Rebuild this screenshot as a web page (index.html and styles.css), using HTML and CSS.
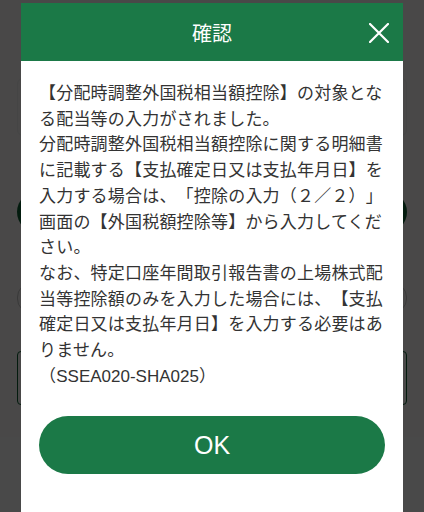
FILE: index.html
```html
<!DOCTYPE html>
<html lang="ja">
<head>
  <meta charset="UTF-8" />
  <meta name="viewport" content="width=device-width, initial-scale=1" />
  <title>確認</title>
  <link rel="stylesheet" href="styles.css">
</head>
<body>
  <div class="page">
    <div class="field"></div>
    <div class="pill-btn"></div>
    <div class="pill-ghost"></div>
    <div class="input-box"></div>
    <div class="footer"></div>
  </div>

  <div class="overlay">
    <div class="dialog">
      <div class="dialog-header">
        <h1 class="dialog-title">確認</h1>
        <button class="close-btn" aria-label="閉じる">
          <svg width="20" height="20" viewBox="0 0 20 20">
            <path d="M1 1 L19 19 M19 1 L1 19" stroke="#fff" stroke-width="2.2" stroke-linecap="round" fill="none"/>
          </svg>
        </button>
      </div>
      <div class="dialog-body">
        <p>【分配時調整外国税相当額控除】の対象となる配当等の入力がされました。</p>
        <p>分配時調整外国税相当額控除に関する明細書に記載する【支払確定日又は支払年月日】を入力する場合は、「控除の入力（２／２）」画面の【外国税額控除等】から入力してください。</p>
        <p>なお、特定口座年間取引報告書の上場株式配当等控除額のみを入力した場合には、【支払確定日又は支払年月日】を入力する必要はありません。</p>
        <p>（<span class="code">SSEA020-SHA025</span>）</p>
        <button class="ok-btn">OK</button>
      </div>
    </div>
  </div>
</body>
</html>
```

FILE: styles.css
```css
body {
  margin: 0;
  font-family: "Noto Sans CJK JP", "Noto Sans", sans-serif;
  background-color: #fdfafa;
  height: 512px;
  overflow: hidden;
}
.page {
  padding: 78px 17px 0;
  display: flex;
  flex-direction: column;
}
.field {
  height: 56px;
  border: 1px solid #f0f0f0;
  border-radius: 6px;
}
.pill-btn {
  margin-top: 55px;
  height: 42px;
  border-radius: 21px;
  background: #0c5f33;
}
.pill-ghost {
  margin-top: 50px;
  height: 28px;
  border-radius: 14px;
  border: 1px solid #c8c8c8;
}
.input-box {
  margin-top: 38px;
  height: 52px;
  border: 1px solid #0c5f33;
  border-radius: 4px;
}
.footer {
  margin: 32px -17px 0;
  height: 90px;
  background: #ffffff;
}

.overlay {
  position: fixed;
  inset: 0;
  background: rgba(0, 0, 0, 0.715);
}
.dialog {
  margin: 3px 21px 0;
  background: #fff;
  height: 520px;
}
.dialog-header {
  position: relative;
  height: 58px;
  background-color: #1b7947;
  display: flex;
  align-items: center;
  justify-content: center;
}
.dialog-title {
  margin: 0;
  color: #fff;
  font-size: 20px;
  font-weight: 400;
}
.close-btn {
  position: absolute;
  right: 14px;
  top: 20px;
  padding: 0;
  border: none;
  background: none;
  width: 20px;
  height: 20px;
  display: flex;
}
.dialog-body {
  padding: 18px 18px 0;
  color: #333;
  font-size: 17px;
  line-height: 25.7px;
  letter-spacing: 0.2px;
  text-spacing-trim: space-all;
}
.dialog-body p {
  margin: 0;
}
.code {
  font-family: "Liberation Sans", Arial, sans-serif;
  letter-spacing: 0;
}
.ok-btn {
  display: block;
  width: 100%;
  height: 58px;
  margin-top: 27px;
  border: none;
  border-radius: 29px;
  background-color: #1b7947;
  color: #fff;
  font-family: "Liberation Sans", Arial, sans-serif;
  font-size: 25px;
  padding: 0;
}
```
